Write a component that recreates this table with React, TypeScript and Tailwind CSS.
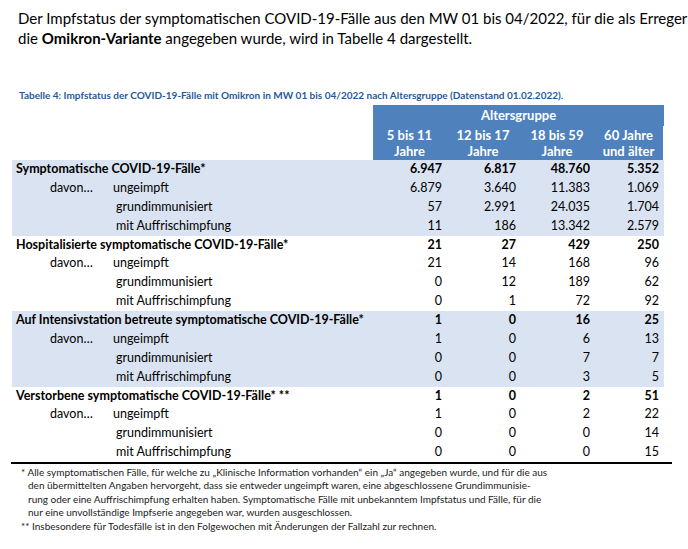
const rows = [
  {
    label: "Symptomatische COVID-19-Fälle*",
    shaded: true,
    total: ["6.947", "6.817", "48.760", "5.352"],
    sub: [
      ["6.879", "3.640", "11.383", "1.069"],
      ["57", "2.991", "24.035", "1.704"],
      ["11", "186", "13.342", "2.579"],
    ],
  },
  {
    label: "Hospitalisierte symptomatische COVID-19-Fälle*",
    shaded: false,
    total: ["21", "27", "429", "250"],
    sub: [
      ["21", "14", "168", "96"],
      ["0", "12", "189", "62"],
      ["0", "1", "72", "92"],
    ],
  },
  {
    label: "Auf Intensivstation betreute symptomatische COVID-19-Fälle*",
    shaded: true,
    total: ["1", "0", "16", "25"],
    sub: [
      ["1", "0", "6", "13"],
      ["0", "0", "7", "7"],
      ["0", "0", "3", "5"],
    ],
  },
  {
    label: "Verstorbene symptomatische COVID-19-Fälle* **",
    shaded: false,
    total: ["1", "0", "2", "51"],
    sub: [
      ["1", "0", "2", "22"],
      ["0", "0", "0", "14"],
      ["0", "0", "0", "15"],
    ],
  },
];

const subLabels = ["ungeimpft", "grundimmunisiert", "mit Auffrischimpfung"];

function Row({ label, values, bold, shaded }: { label: React.ReactNode; values: string[]; bold?: boolean; shaded: boolean }) {
  return (
    <div className={`grid h-[18.875px] grid-cols-[361px_73px_74px_74px_69px] items-center text-[12.5px] text-black ${shaded ? "bg-[#dae3f1]" : ""} ${bold ? "font-bold" : ""}`}>
      <div className="whitespace-nowrap">{label}</div>
      {values.map((v, i) => (
        <div key={i} className="pr-[4px] text-right">
          {v}
        </div>
      ))}
    </div>
  );
}

export default function App() {
  return (
    <div className="h-[549px] w-[688px] overflow-hidden bg-white font-['Lato',sans-serif]">
      <p className="pl-[18px] pt-[8px] text-[15px] leading-[20px] text-black">
        Der Impfstatus der symptomatischen COVID-19-Fälle aus den MW 01 bis 04/2022, für die als Erreger
        <br />
        die <b>Omikron-Variante</b> angegeben wurde, wird in Tabelle 4 dargestellt.
      </p>

      <p className="mt-[41px] pl-[19px] text-[10px] font-bold leading-[12px] text-[#1f5a9c]">
        Tabelle 4: Impfstatus der COVID-19-Fälle mit Omikron in MW 01 bis 04/2022 nach Altersgruppe (Datenstand 01.02.2022).
      </p>

      <div className="ml-[12px] mt-[4px] w-[652px]">
        <div className="ml-[361px] flex h-[21px] w-[291px] items-center justify-center bg-[#4f81bd] text-[13px] font-bold text-white">
          Altersgruppe
        </div>
        <div className="ml-[361px] grid h-[34px] w-[290px] grid-cols-[73px_74px_74px_69px] items-center bg-[#4f81bd] text-center text-[13px] font-bold leading-[16px] text-white">
          <div>5 bis 11<br />Jahre</div>
          <div>12 bis 17<br />Jahre</div>
          <div>18 bis 59<br />Jahre</div>
          <div>60 Jahre<br />und älter</div>
        </div>

        {rows.map((g) => (
          <div key={g.label}>
            <Row shaded={g.shaded} bold label={<span className="pl-[4px]">{g.label}</span>} values={g.total} />
            {g.sub.map((vals, i) => (
              <Row
                key={i}
                shaded={g.shaded}
                values={vals}
                label={
                  i === 0 ? (
                    <span className="flex">
                      <span className="w-[101px] pl-[38px]">davon…</span>
                      <span>{subLabels[i]}</span>
                    </span>
                  ) : (
                    <span className="pl-[104px]">{subLabels[i]}</span>
                  )
                }
              />
            ))}
          </div>
        ))}
      </div>
      <div className="ml-[11px] h-[1.5px] w-[661px] bg-black" />

      <div className="pl-[21px] pt-[2px] text-[10px] leading-[13.5px] text-[#1a1a1a]">
        <p className="pl-[7px] -indent-[7px]">
          * Alle symptomatischen Fälle, für welche zu „Klinische Information vorhanden“ ein „Ja“ angegeben wurde, und für die aus
          <br />
          den übermittelten Angaben hervorgeht, dass sie entweder ungeimpft waren, eine abgeschlossene Grundimmunisie-
          <br />
          rung oder eine Auffrischimpfung erhalten haben. Symptomatische Fälle mit unbekanntem Impfstatus und Fälle, für die
          <br />
          nur eine unvollständige Impfserie angegeben war, wurden ausgeschlossen.
        </p>
        <p>** Insbesondere für Todesfälle ist in den Folgewochen mit Änderungen der Fallzahl zur rechnen.</p>
      </div>
    </div>
  );
}
